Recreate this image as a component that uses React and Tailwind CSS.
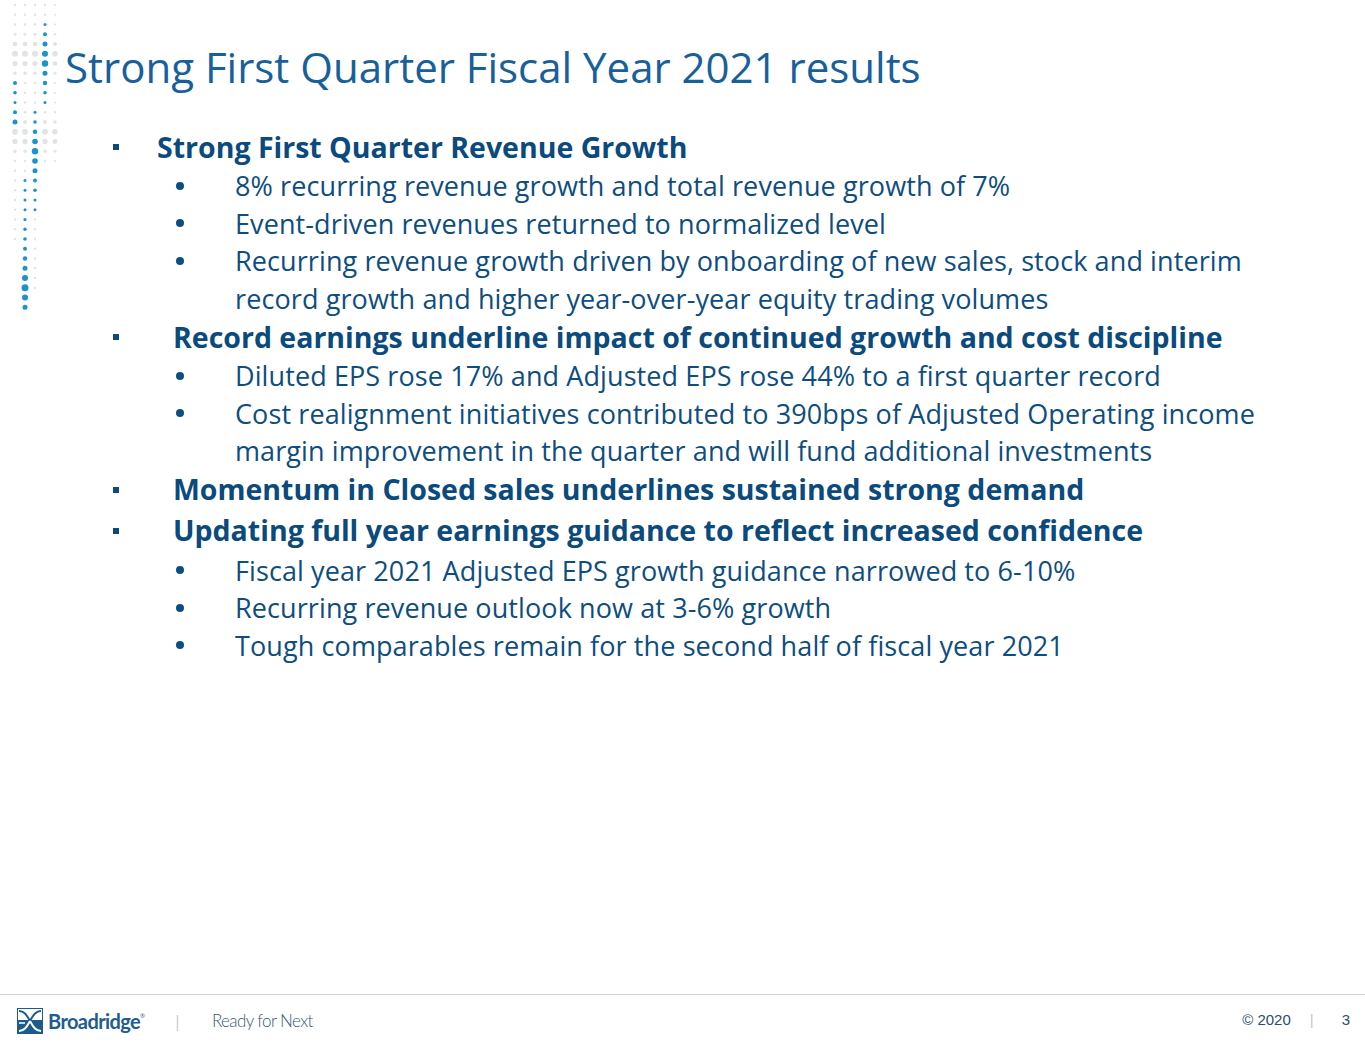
import React from 'react';

const COLS = [15, 25, 35, 45, 55];
const rowY = (i) => 5 + i * 9.75;

// blue runs per column: [startRow, radii]
const BLUE = {
  0: [8, [2, 1.8, 1.5, 2, 2.5]],
  1: [18, [1.5, 1.5, 1.5, 1.5, 1.6, 1.7, 1.8, 2, 2.2, 2.5, 3, 3.5, 3, 2.5]],
  2: [11, [1.5, 1.8, 2.2, 2.8, 3.2, 2.8, 2.5, 2, 1.8, 1.5, 1.5]],
  3: [2, [1.5, 2, 2.5, 3, 3.2, 2.5, 2.2, 1.8, 1.5]],
};
const GREY_ROWS = { 0: 25, 1: 18, 2: 30, 3: 17, 4: 17 };

const greyR = (y, c) => {
  const base = c === 4 ? 1 : 1.2;
  return base + 1.8 * Math.exp(-(((y - 55) / 16) ** 2)) + 1.8 * Math.exp(-(((y - 135) / 14) ** 2));
};

const Dots = () => {
  const dots = [];
  COLS.forEach((x, c) => {
    const blue = BLUE[c];
    for (let i = 0; i < 32; i++) {
      const y = rowY(i);
      if (blue && i >= blue[0] && i < blue[0] + blue[1].length) {
        dots.push(<circle key={`${c}-${i}`} cx={x} cy={y} r={blue[1][i - blue[0]]} fill="#1b94cc" />);
      } else if (i < GREY_ROWS[c]) {
        dots.push(<circle key={`${c}-${i}`} cx={x} cy={y} r={greyR(y, c)} fill="#e2e3e5" />);
      }
    }
  });
  return (
    <svg className="absolute left-0 top-0" width="62" height="320" viewBox="0 0 62 320">
      {dots}
    </svg>
  );
};

const Logo = () => (
  <svg width="26" height="26" viewBox="0 0 26 26">
    <rect x="0.5" y="0.5" width="25" height="25" fill="#fff" stroke="#1d5b8f" />
    <rect x="0" y="12" width="26" height="14" fill="#1d5b8f" />
    <path d="M2 3 C8 3 10 8 13 13 C16 18 18 23 24 23" fill="none" stroke="#1d5b8f" strokeWidth="2" />
    <path d="M24 3 C18 3 16 8 13 13 C10 18 8 23 2 23" fill="none" stroke="#1d5b8f" strokeWidth="2" />
    <path d="M13 13 C16 18 18 23 24 23" fill="none" stroke="#fff" strokeWidth="2" />
    <path d="M13 13 C10 18 8 23 2 23" fill="none" stroke="#fff" strokeWidth="2" />
    <path d="M2 15 H8" stroke="#fff" strokeWidth="1.5" />
  </svg>
);

const sections = [
  {
    title: 'Strong First Quarter Revenue Growth',
    indent: 'w-[44px]',
    items: [
      ['8% recurring revenue growth and total revenue growth of 7%'],
      ['Event-driven revenues returned to normalized level'],
      ['Recurring revenue growth driven by onboarding of new sales, stock and interim', 'record growth and higher year-over-year equity trading volumes'],
    ],
  },
  {
    title: 'Record earnings underline impact of continued growth and cost discipline',
    indent: 'w-[60px]',
    items: [
      ['Diluted EPS rose 17% and Adjusted EPS rose 44% to a first quarter record'],
      ['Cost realignment initiatives contributed to 390bps of Adjusted Operating income', 'margin improvement in the quarter and will fund additional investments'],
    ],
  },
  {
    title: 'Momentum in Closed sales underlines sustained strong demand',
    indent: 'w-[60px]',
    items: [],
  },
  {
    title: 'Updating full year earnings guidance to reflect increased confidence',
    indent: 'w-[60px]',
    items: [
      ['Fiscal year 2021 Adjusted EPS growth guidance narrowed to 6-10%'],
      ['Recurring revenue outlook now at 3-6% growth'],
      ['Tough comparables remain for the second half of fiscal year 2021'],
    ],
  },
];

export default function App() {
  return (
    <div className="relative w-[1365px] h-[1055px] bg-white flex flex-col overflow-hidden" style={{ fontFamily: '"Open Sans", Lato, sans-serif' }}>
      <Dots />

      <h1 className="pl-[65px] pt-[43px] text-[42px] leading-[48px] text-[#17609a] font-normal">
        Strong First Quarter Fiscal Year 2021 results
      </h1>

      <div className="flex flex-col pl-[113px] pt-[36px]">
        {sections.map((s, si) => (
          <div key={s.title} className="flex flex-col">
            <div className={`flex items-center ${si === 3 ? 'h-[42px]' : 'h-[40px]'}`}>
              <span className={`${s.indent} shrink-0 flex`}>
                <span className="w-[6px] h-[6px] bg-[#0b4a7c]" />
              </span>
              <span className="text-[28.5px] font-bold text-[#0b4a7c]">{s.title}</span>
            </div>
            {s.items.map((lines) => (
              <div key={lines[0]} className="flex text-[27px] leading-[37.5px] text-[#0e4d80] tracking-[0.1px]">
                <span className="w-[122px] shrink-0 pl-[63px] h-[37.5px] flex items-center">
                  <span className="w-[8px] h-[8px] rounded-full bg-[#0e4d80]" />
                </span>
                <div className="flex flex-col">
                  {lines.map((l) => (
                    <span key={l}>{l}</span>
                  ))}
                </div>
              </div>
            ))}
          </div>
        ))}
      </div>

      <div className="mt-auto h-[61px] border-t border-[#d4d4d4] flex items-center pl-[17px] pb-[9px]">
        <div className="flex items-center">
          <Logo />
          <span className="ml-[5px] text-[20px] font-bold text-[#1f5c90] tracking-[-0.6px]" style={{ fontFamily: 'Lato, sans-serif' }}>Broadridge</span>
          <span className="text-[6px] text-[#1f5c90] -mt-[8px]">®</span>
        </div>
        <span className="ml-[28px] text-[16px] text-[#c8c8c8]">|</span>
        <span className="ml-[30px] text-[17px] font-light text-[#3b5875] tracking-[-0.6px]" style={{ fontFamily: 'Lato, sans-serif' }}>Ready for Next</span>
        <div className="ml-auto flex items-center text-[15px] text-[#2c4c6e] pr-[15px]" style={{ fontFamily: '"Liberation Sans", Arial, sans-serif' }}>
          <span>© 2020</span>
          <span className="ml-[19px] text-[#c8c8c8]">|</span>
          <span className="ml-[28px]">3</span>
        </div>
      </div>
    </div>
  );
}
